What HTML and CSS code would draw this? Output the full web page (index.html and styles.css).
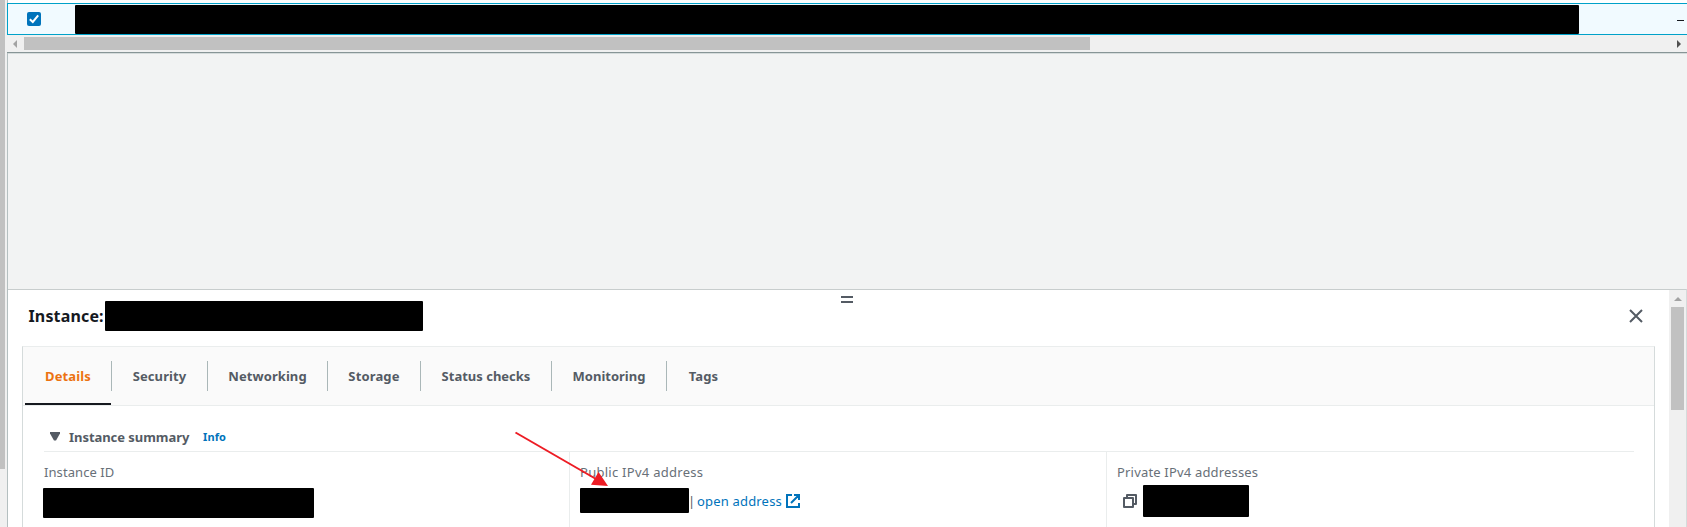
FILE: index.html
```html
<!DOCTYPE html>
<html lang="en">
<head>
<meta charset="utf-8">
<title>Instances</title>
<link rel="stylesheet" href="styles.css">
</head>
<body>
<div class="page-scroll"><div class="page-thumb"></div></div>
<main class="main">
  <section class="table">
    <div class="row">
      <span class="check"><svg width="14" height="14" viewBox="0 0 14 14"><path d="M2.800 7.200 5.800 10l5.400-6.700" fill="none" stroke="#fff" stroke-width="2"/></svg></span>
      <span class="mask mask-row"></span>
      <span class="dash"></span>
    </div>
    <div class="hscroll">
      <svg class="arrow-left" width="4" height="8" viewBox="0 0 4 8"><path d="M4 0v8L0 4z" fill="#a3a3a3"/></svg>
      <span class="hthumb"></span>
      <svg class="arrow-right" width="4" height="8" viewBox="0 0 4 8"><path d="M0 0v8l4-4z" fill="#505050"/></svg>
    </div>
  </section>
  <div class="gap"></div>
  <section class="panel">
    <div class="content">
      <div class="handle"></div>
      <header class="head">
        <h2 class="title">Instance:</h2>
        <span class="mask mask-title"></span>
        <svg class="close" width="14" height="14" viewBox="0 0 14 14"><path d="M1 1l12 12M13 1 1 13" stroke="#545b64" stroke-width="2" fill="none"/></svg>
      </header>
      <div class="card">
        <nav class="tabs">
          <a class="tab tab-details active">Details</a>
          <a class="tab tab-security">Security</a>
          <a class="tab tab-networking">Networking</a>
          <a class="tab tab-storage">Storage</a>
          <a class="tab tab-status">Status checks</a>
          <a class="tab tab-monitoring">Monitoring</a>
          <a class="tab tab-tags">Tags</a>
        </nav>
        <div class="summary">
          <div class="summary-head">
            <svg class="caret" width="10" height="9" viewBox="0 0 10 9"><path d="M0 0h10v1.500L6 8.500H4L0 1.500z" fill="#545b64"/></svg>
            <span class="summary-title">Instance summary</span>
            <a class="info">Info</a>
          </div>
          <div class="cols">
            <div class="col col-id">
              <div class="label label-id">Instance ID</div>
              <div class="value"><span class="mask mask-id"></span></div>
            </div>
            <div class="col">
              <div class="label label-public">Public IPv4 address</div>
              <div class="value">
                <span class="mask mask-public"></span>
                <span class="bar">|</span>
                <a class="link">open address</a>
                <svg class="external" width="14" height="14" viewBox="0 0 14 14" fill="none" stroke="#0073bb" stroke-width="2"><path d="M6 1H1v12h12V9M8 1h5v5M13 1 5 9"/></svg>
              </div>
            </div>
            <div class="col">
              <div class="label label-private">Private IPv4 addresses</div>
              <div class="value">
                <svg class="copy" width="14" height="14" viewBox="0 0 14 14" fill="none" stroke="#545b64" stroke-width="2" stroke-linejoin="round"><path d="M1 4h9v9H1zM4 4V1h9v9h-3"/></svg>
                <span class="mask mask-private"></span>
              </div>
            </div>
          </div>
        </div>
      </div>
    </div>
    <div class="vscroll">
      <svg width="8" height="4" viewBox="0 0 8 4"><path d="M0 4h8L4 0z" fill="#a3a3a3"/></svg>
      <div class="vthumb"></div>
    </div>
  </section>
</main>
<svg class="pointer" width="100" height="60" viewBox="0 0 100 60"><path d="M3.500 2.500 84 49" stroke="#ed1c24" stroke-width="2"/><path d="M86.500 42 96 56 79 54.800z" fill="#ed1c24"/></svg>
</body>
</html>
```
FILE: styles.css
```css
* { box-sizing: border-box; }
body {
  margin: 0;
  width: 1687px;
  height: 527px;
  overflow: hidden;
  display: flex;
  background: #fff;
  font: 13px/20px "Noto Sans", sans-serif;
  color: #545b64;
}
svg { display: block; flex: none; }
.page-scroll { width: 7px; background: #f0f0f0; flex: none; }
.page-thumb { width: 5px; height: 469px; background: #c1c1c1; }
.main { width: 1680px; display: flex; flex-direction: column; border-left: 1px solid #b4bfc0; }
.mask { display: block; background: #000; flex: none; border-radius: 1px; }

.table { padding-top: 3px; border-bottom: 1px solid #879596; height: 53px; margin-left: -1px; flex: none; }
.row {
  height: 32px;
  display: flex;
  border: 1px solid #00a1c9;
  border-right: 0;
  background: #f1faff;
}
.check { width: 14px; height: 14px; margin: 8px 34px 0 19px; background: #0073bb; border-radius: 2px; }
.mask-row { width: 1504px; height: 29px; margin-top: 1px; }
.dash { width: 7px; height: 1px; background: #16191f; margin: 16px 0 0 98px; }
.hscroll { height: 17px; background: #f0f0f0; display: flex; align-items: center; padding: 0 6px; }
.hthumb { width: 1066px; height: 13px; background: #c1c1c1; margin-left: 7px; }
.arrow-right { margin-left: auto; margin-right: 0; }

.gap { height: 236px; flex: none; background: #f2f3f3; border-top: 1px solid #d5dbdb; }
.panel { height: 238px; display: flex; border-top: 1px solid #c8cdcd; border-right: 1px solid #d5dbdb; }
.content { width: 1661px; display: flex; flex-direction: column; }
.handle { width: 12px; height: 7px; margin: 6px 0 0 833px; border: solid #545b64; border-width: 2px 0; flex: none; }
.head { height: 43px; display: flex; flex: none; }
.title { margin: 3px 0 0 20.5px; width: 76.5px; font-size: 16px; line-height: 20px; letter-spacing: 0.15px; color: #16191f; white-space: nowrap; }
.mask-title { width: 318px; height: 30px; margin-top: -2px; }
.close { margin: 6px 26px 0 auto; }
.card { width: 1633px; height: 181px; margin-left: 14px; border: 1px solid #d5dbdb; border-top-color: #eaeded; border-bottom: 0; flex: none; }
.tabs { height: 59px; display: flex; background: #fafafa; border-bottom: 1px solid #eaeded; padding-left: 2px; }
.tab { height: 58px; padding: 19px 1px 0 0; font-weight: 700; text-align: center; white-space: nowrap; position: relative; flex: none; }
.tab:not(:last-child)::after { content: ""; position: absolute; right: 0; top: 14px; width: 1px; height: 30px; background: #aab7b8; }
.active { color: #ec7211; }
.active::before { content: ""; position: absolute; left: 0; right: 1px; bottom: 0; height: 2px; background: #16191f; }
.tab-details { width: 87px; letter-spacing: 0.12px; }
.tab-security { width: 96px; letter-spacing: 0.1px; }
.tab-networking { width: 120px; letter-spacing: 0.07px; }
.tab-storage { width: 93px; letter-spacing: 0.15px; }
.tab-status { width: 131px; }
.tab-monitoring { width: 115px; }
.tab-tags { width: 74px; letter-spacing: 0.1px; }

.summary { padding: 0 20px 0 21px; }
.summary-head { height: 46px; padding: 17px 0 0 6px; display: flex; align-items: center; border-bottom: 1px solid #eaeded; }
.caret { margin-top: -1px; }
.summary-title { width: 134px; margin-left: 9px; font-weight: 700; letter-spacing: -0.05px; white-space: nowrap; }
.info { color: #0073bb; font-size: 11px; font-weight: 700; letter-spacing: 0.1px; }
.cols { display: grid; grid-template-columns: 525px 537px 1fr; height: 75px; }
.col + .col { border-left: 1px solid #eaeded; padding-left: 10px; }
.label { padding-top: 10px; height: 33px; color: #687078; white-space: nowrap; }
.label-id { letter-spacing: 0.08px; }
.label-public { letter-spacing: 0.27px; }
.label-private { letter-spacing: 0.18px; }
.value { display: flex; align-items: flex-start; white-space: nowrap; }
.mask-id { width: 271px; height: 30px; margin: 3px 0 0 -1px; }
.mask-public { width: 109px; height: 25px; margin-top: 3px; }
.bar { width: 8px; padding-top: 6px; text-indent: -1px; }
.link { width: 89px; padding-top: 6px; color: #0073bb; letter-spacing: 0.18px; }
.external { margin-top: 9px; }
.copy { margin: 9px 6px 0; }
.mask-private { width: 106px; height: 32px; }

.vscroll { width: 17px; background: #f0f0f0; display: flex; flex-direction: column; align-items: center; padding-top: 7px; }
.vthumb { width: 13px; height: 103px; margin-top: 6px; background: #c1c1c1; }
.pointer { position: absolute; left: 512px; top: 430px; }
```
